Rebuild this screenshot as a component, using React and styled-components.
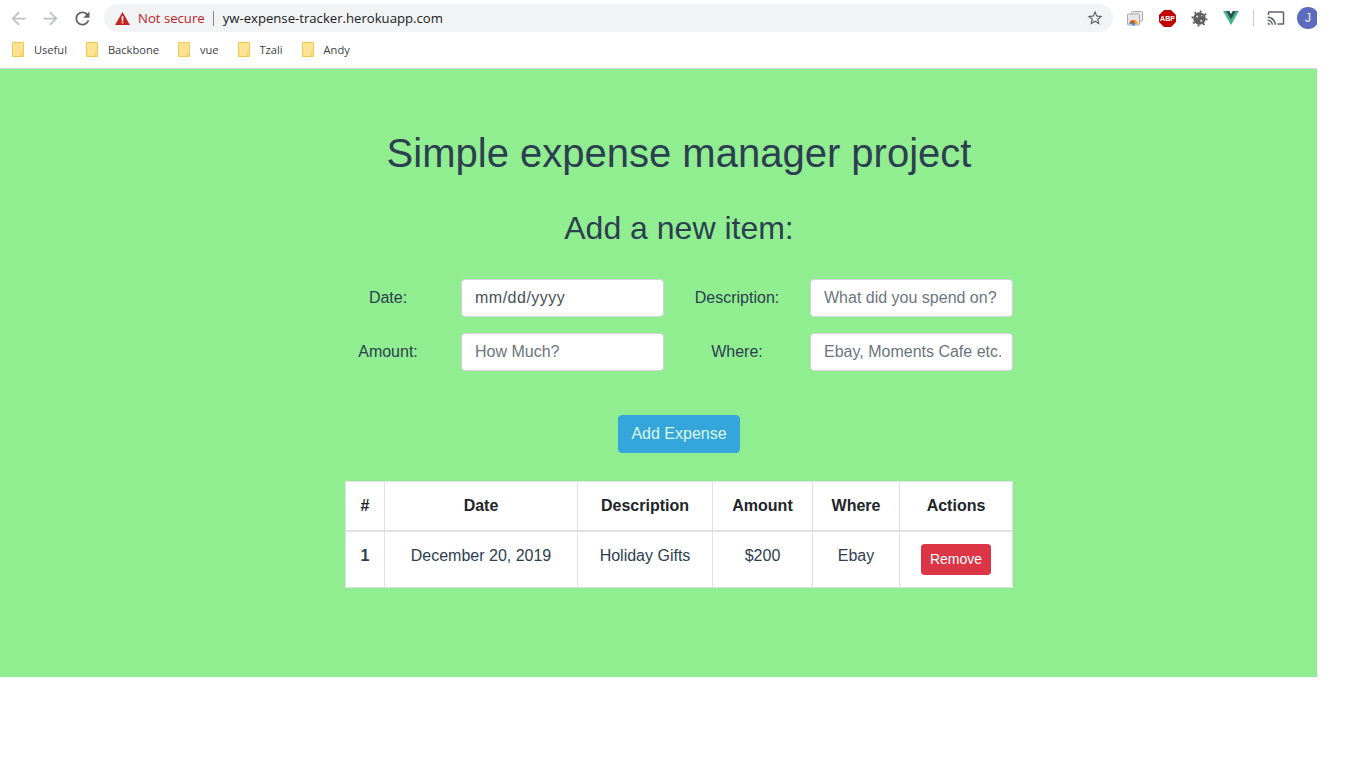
import React from "react";
import styled, { createGlobalStyle } from "styled-components";

const Global = createGlobalStyle`
  html, body { margin: 0; padding: 0; background: #fff; }
  * { box-sizing: border-box; }
`;

const Page = styled.div`
  width: 1317px;
  overflow: hidden;
  font-family: "Liberation Sans", Arial, sans-serif;
`;

const BrowserChrome = styled.header`
  height: 69px;
  background: #fff;
  border-bottom: 1px solid #d4d6d8;
  font-family: "Open Sans", "Noto Sans", sans-serif;
`;

const Toolbar = styled.div`
  display: flex;
  align-items: center;
  height: 36px;
  padding-left: 2px;
`;

const IconSlot = styled.div`
  flex: none;
  display: flex;
  align-items: center;
  justify-content: center;
  width: 32px;
  height: 28px;
`;

const Omnibox = styled.div`
  flex: none;
  display: flex;
  align-items: center;
  width: 1009px;
  height: 28px;
  margin: 0 6px;
  padding: 0 9px 0 11px;
  border-radius: 14px;
  background: #f1f3f4;
  font-size: 13.15px;
  white-space: nowrap;
`;

const NotSecure = styled.span`
  margin-left: 8px;
  color: #c5221f;
`;

const OmniDivider = styled.span`
  width: 1px;
  height: 15px;
  margin: 0 9px 0 8px;
  background: #80868b;
`;

const Url = styled.span`
  flex: 1;
  color: #202124;
`;

const ToolbarDivider = styled.span`
  flex: none;
  width: 1px;
  height: 16px;
  margin: 0 6px;
  background: #c8cacc;
`;

const Avatar = styled.div`
  flex: none;
  display: flex;
  align-items: center;
  justify-content: center;
  width: 22px;
  height: 22px;
  margin-left: 5px;
  border-radius: 50%;
  background: #5c6bc0;
  color: #f1f2fb;
  font-family: "Liberation Sans", Arial, sans-serif;
  font-size: 12px;
`;

const BookmarkBar = styled.nav`
  display: flex;
  align-items: center;
  gap: 19px;
  height: 32px;
  padding: 0 0 5px 12px;
`;

const Bookmark = styled.span`
  display: flex;
  align-items: center;
  gap: 10px;
  font-size: 11.1px;
  color: #3c4043;
`;

const Main = styled.main`
  height: 608px;
  padding: 60px 0 0 345px;
  background: #90ee90;
  color: #2c3e50;
`;

const Content = styled.div`
  width: 668px;
`;

const Title = styled.h1`
  margin: 0 0 32px;
  font-size: 40px;
  font-weight: 400;
  line-height: 48px;
  text-align: center;
  white-space: nowrap;
`;

const Subtitle = styled.h2`
  margin: 0 0 32px;
  font-size: 32px;
  font-weight: 400;
  line-height: 38px;
  text-align: center;
`;

const FormGrid = styled.form`
  display: grid;
  grid-template-columns: 86px 203px 86px 203px;
  column-gap: 30px;
  row-gap: 16px;
  align-items: center;
`;

const FieldLabel = styled.label`
  font-size: 16px;
  line-height: 24px;
  text-align: center;
  white-space: nowrap;
`;

const Field = styled.input`
  display: block;
  width: 100%;
  height: 38px;
  padding: 6px 11px 6px 13px;
  border: 1px solid #ced4da;
  border-radius: 4px;
  background: #fff;
  color: #495057;
  font: 400 16px/24px "Liberation Sans", Arial, sans-serif;
  letter-spacing: ${(p) => (p.$spaced ? "0.5px" : "0")};
  outline: none;
  &::placeholder { color: #6c757d; opacity: 1; }
`;

const ButtonRow = styled.div`
  display: flex;
  justify-content: center;
  margin: 44px 0 28px;
`;

const AddButton = styled.button`
  width: 122px;
  height: 38px;
  padding: 6px 0;
  border: 1px solid #35a6dc;
  border-radius: 4px;
  background: #35a6dc;
  color: #dcf7ea;
  font: 400 16px/24px "Liberation Sans", Arial, sans-serif;
`;

const Table = styled.table`
  width: 667px;
  table-layout: fixed;
  border-collapse: collapse;
  background: #fff;
  color: #2c3e50;
  font-size: 16px;
  line-height: 24px;
`;

const HeadCell = styled.th`
  width: ${(p) => p.$width}px;
  padding: 12px 0;
  border: 1px solid #dee2e6;
  border-bottom-width: 2px;
  color: #212529;
  font-weight: 700;
  text-align: center;
  vertical-align: bottom;
`;

const RowHead = styled.th`
  padding: 12px 0;
  border: 1px solid #dee2e6;
  font-weight: 700;
  text-align: center;
  vertical-align: top;
`;

const Cell = styled.td`
  padding: 12px 0;
  border: 1px solid #dee2e6;
  text-align: center;
  vertical-align: top;
`;

const RemoveButton = styled.button`
  display: inline-block;
  width: 70px;
  padding: 4px 0;
  border: 1px solid #dc3545;
  border-radius: 3.2px;
  background: #dc3545;
  color: #fff;
  font: 400 14px/21px "Liberation Sans", Arial, sans-serif;
  vertical-align: middle;
`;

const NavIcon = ({ d, color, size = 21 }) => (
  <svg width={size} height={size} viewBox="0 0 24 24" fill={color}><path d={d} /></svg>
);

const BACK = "M20 11H7.83l5.59-5.59L12 4l-8 8 8 8 1.41-1.41L7.83 13H20v-2z";
const FORWARD = "M4 11h12.17l-5.59-5.59L12 4l8 8-8 8-1.41-1.41L16.17 13H4v-2z";
const RELOAD = "M17.65 6.35C16.2 4.9 14.21 4 12 4c-4.42 0-7.99 3.58-7.99 8s3.57 8 7.99 8c3.73 0 6.84-2.55 7.73-6h-2.08c-.82 2.33-3.04 4-5.65 4-3.31 0-6-2.69-6-6s2.69-6 6-6c1.66 0 3.14.69 4.22 1.78L13 11h7V4l-2.35 2.35z";
const STAR = "M22 9.24l-7.19-.62L12 2 9.19 8.63 2 9.24l5.46 4.73L5.82 21 12 17.27 18.18 21l-1.63-7.03L22 9.24zM12 15.4l-3.76 2.27 1-4.28-3.32-2.88 4.38-.38L12 6.1l1.71 4.04 4.38.38-3.32 2.88 1 4.28L12 15.4z";
const CAST = "M21 3H3c-1.1 0-2 .9-2 2v3h2V5h18v14h-7v2h7c1.1 0 2-.9 2-2V5c0-1.1-.9-2-2-2zM1 18v3h3c0-1.66-1.34-3-3-3zm0-4v2c2.76 0 5 2.24 5 5h2c0-3.87-3.13-7-7-7zm0-4v2c4.97 0 9 4.03 9 9h2c0-6.08-4.93-11-11-11z";

const Warning = () => (
  <svg width="15" height="13" viewBox="0 0 16 14" style={{ flex: "none" }}>
    <path d="M8 0 L16 14 H0 Z" fill="#c5221f" />
    <rect x="7.1" y="4.5" width="1.8" height="5" fill="#fff" />
    <rect x="7.1" y="10.4" width="1.8" height="1.8" fill="#fff" />
  </svg>
);

const CastWindows = () => (
  <svg width="16" height="16" viewBox="0 0 16 16">
    <rect x="4.5" y="1.5" width="11" height="9.5" rx="1" fill="#ececec" stroke="#a8abad" />
    <rect x="0.5" y="4" width="12" height="11" rx="1" fill="#e6e6e6" stroke="#a8abad" />
    <path d="M2.5 14a4 4 0 0 1 8 0z" fill="#ea4335" />
    <path d="M6.5 10a4 4 0 0 1 4 4H8.5z" fill="#fbbc04" />
    <path d="M2.5 14a4 4 0 0 1 1-2.6L5 14z" fill="#34a853" />
    <circle cx="6.5" cy="14" r="1.6" fill="#4285f4" />
  </svg>
);

const AbpIcon = () => (
  <svg width="17" height="17" viewBox="0 0 17 17">
    <path d="M5 0h7l5 5v7l-5 5H5l-5-5V5z" fill="#c00000" />
    <text x="8.5" y="11.4" textAnchor="middle" fontFamily="Liberation Sans" fontWeight="700" fontSize="7.8" textLength="15" lengthAdjust="spacingAndGlyphs" fill="#fff">ABP</text>
  </svg>
);

const BugIcon = () => (
  <svg width="17" height="17" viewBox="0 0 17 17">
    <circle cx="8.5" cy="8.5" r="6.2" fill="#5f5f5f" />
    <circle cx="8.5" cy="8.5" r="7" fill="none" stroke="#5f5f5f" strokeWidth="2" strokeDasharray="1.8 3.7" />
    <circle cx="6.2" cy="6.6" r="1.1" fill="#ddd" />
    <circle cx="10.8" cy="5.8" r="0.7" fill="#ddd" />
    <circle cx="10.2" cy="10.8" r="1.1" fill="#ddd" />
  </svg>
);

const VueIcon = () => (
  <svg width="16" height="14" viewBox="0 0 261.76 226.69">
    <path d="M161.096.001l-30.225 52.351L100.647.001H-.005l130.876 226.688L261.749.001z" fill="#41b883" />
    <path d="M161.096.001l-30.225 52.351L100.647.001H52.346l78.525 136.01L209.398.001z" fill="#34495e" />
  </svg>
);

const FolderIcon = () => (
  <svg width="12" height="15" viewBox="0 0 12 15">
    <path d="M.5.5h11v14H.5z" fill="#fde293" stroke="#f2c94c" />
    <path d="M9 15v-3h3" fill="none" stroke="#f2c94c" />
  </svg>
);

const bookmarks = ["Useful", "Backbone", "vue", "Tzali", "Andy"];
const headers = [
  ["#", 39],
  ["Date", 193],
  ["Description", 135],
  ["Amount", 100],
  ["Where", 87],
  ["Actions", 113],
];

export default function App() {
  return (
    <Page>
      <Global />
      <BrowserChrome>
        <Toolbar>
          <IconSlot><NavIcon d={BACK} color="#bdc1c6" /></IconSlot>
          <IconSlot><NavIcon d={FORWARD} color="#bdc1c6" /></IconSlot>
          <IconSlot><NavIcon d={RELOAD} color="#5f6368" /></IconSlot>
          <Omnibox>
            <Warning />
            <NotSecure>Not secure</NotSecure>
            <OmniDivider />
            <Url>yw-expense-tracker.herokuapp.com</Url>
            <NavIcon d={STAR} color="#5f6368" size={18} />
          </Omnibox>
          <IconSlot><CastWindows /></IconSlot>
          <IconSlot><AbpIcon /></IconSlot>
          <IconSlot><BugIcon /></IconSlot>
          <IconSlot><VueIcon /></IconSlot>
          <ToolbarDivider />
          <IconSlot><NavIcon d={CAST} color="#5f6368" size={18} /></IconSlot>
          <Avatar>J</Avatar>
        </Toolbar>
        <BookmarkBar>
          {bookmarks.map((name) => (
            <Bookmark key={name}><FolderIcon />{name}</Bookmark>
          ))}
        </BookmarkBar>
      </BrowserChrome>
      <Main>
        <Content>
          <Title>Simple expense manager project</Title>
          <Subtitle>Add a new item:</Subtitle>
          <FormGrid>
            <FieldLabel>Date:</FieldLabel>
            <Field readOnly value="mm/dd/yyyy" $spaced />
            <FieldLabel>Description:</FieldLabel>
            <Field placeholder="What did you spend on?" />
            <FieldLabel>Amount:</FieldLabel>
            <Field placeholder="How Much?" />
            <FieldLabel>Where:</FieldLabel>
            <Field placeholder="Ebay, Moments Cafe etc." />
          </FormGrid>
          <ButtonRow><AddButton type="button">Add Expense</AddButton></ButtonRow>
          <Table>
            <thead>
              <tr>{headers.map(([h, w]) => <HeadCell key={h} $width={w}>{h}</HeadCell>)}</tr>
            </thead>
            <tbody>
              <tr>
                <RowHead>1</RowHead>
                <Cell>December 20, 2019</Cell>
                <Cell>Holiday Gifts</Cell>
                <Cell>$200</Cell>
                <Cell>Ebay</Cell>
                <Cell><RemoveButton type="button">Remove</RemoveButton></Cell>
              </tr>
            </tbody>
          </Table>
        </Content>
      </Main>
    </Page>
  );
}
